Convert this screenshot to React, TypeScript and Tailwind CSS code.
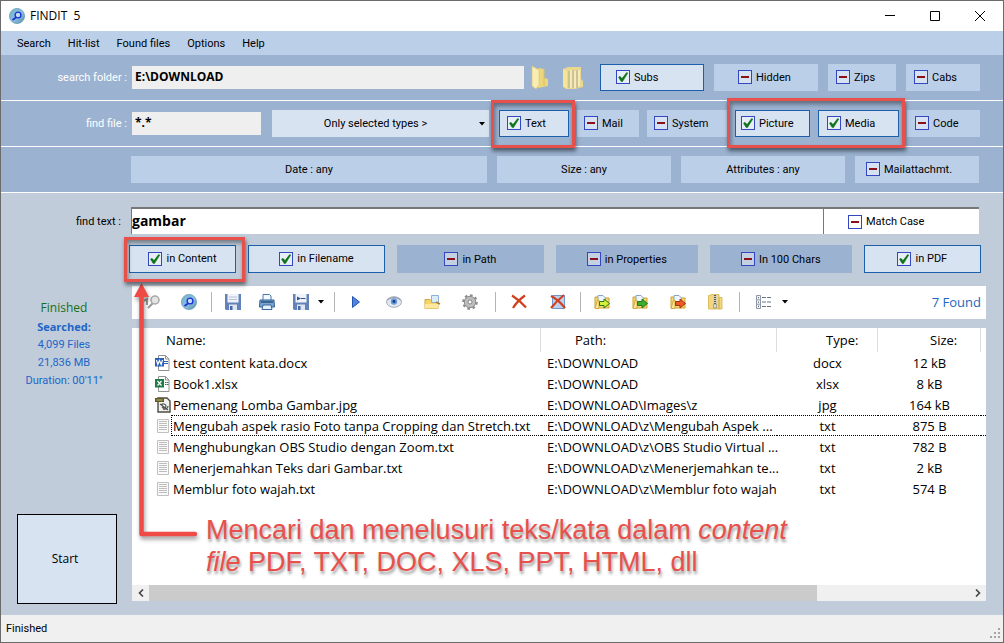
import React from "react";

const ui = "font-['Open_Sans','Noto_Sans',sans-serif]";

function Toggle({ label, checked = false, className = "" }: { label: string; checked?: boolean; className?: string }) {
  return (
    <label className={`flex items-center gap-1 whitespace-nowrap ${className}`}>
      <span className="grid size-3.5 shrink-0">
        <input
          type="checkbox"
          defaultChecked={checked}
          className="peer col-start-1 row-start-1 size-3.5 appearance-none border border-[#3348c0] bg-white/40"
        />
        <svg viewBox="0 0 14 14" className="pointer-events-none col-start-1 row-start-1 hidden size-3.5 peer-checked:block">
          <path d="M2.500 7.200l1.500-.9L6 8.600l4.600-6 1.200.500L6.500 11.600H5.200z" fill="#0a7414" stroke="#0a6a10" strokeWidth=".5" />
        </svg>
        <svg viewBox="0 0 14 14" className="pointer-events-none col-start-1 row-start-1 size-3.5 peer-checked:hidden">
          <path d="M3 6h8v2H3z" fill="#8c1018" />
        </svg>
      </span>
      <span className="pt-0.5">{label}</span>
    </label>
  );
}

const on = "border border-[#1d5fa8] bg-[#d8e3f2] pb-px";
const off = "border border-[#bbcfe9] bg-[#bbcfe9] pb-px";
const dim = "border border-[#9bb2d1] bg-[#9bb2d1]";
const mark = "pointer-events-none absolute border-[3px] border-[#e8504c] shadow-[1px_3px_4px_rgba(0,0,0,0.5),inset_1px_3px_4px_rgba(0,0,0,0.4)]";

function Caret() {
  return (
    <svg width="6" height="4" viewBox="0 0 6 4"><path d="M0 0h6L3 3.500z" fill="#000" /></svg>
  );
}

function FinditLogo() {
  return (
    <svg width="16" height="16" viewBox="0 0 16 16">
      <defs>
        <linearGradient id="lens" x1="0" y1="0" x2="1" y2="1">
          <stop offset="0" stopColor="#6fb4c8" /><stop offset=".55" stopColor="#8fbede" /><stop offset="1" stopColor="#4a8ea4" />
        </linearGradient>
      </defs>
      <circle cx="8" cy="8" r="7.600" fill="url(#lens)" stroke="#5b97ac" strokeWidth=".7" />
      <path d="M7 9.500l-3.500 2.500" stroke="#1733d8" strokeWidth="1.800" />
      <circle cx="9" cy="7" r="2.900" fill="#c4dcf4" stroke="#1733d8" strokeWidth="1.400" />
    </svg>
  );
}

function Disk({ arrow = false }: { arrow?: boolean }) {
  return (
    <svg width="16" height="16" viewBox="0 0 16 16">
      <path d="M0 0h16v16H1l-1-1z" fill="#6482ba" />
      <path d="M2.500 0h11v8.500h-11z" fill="#f0f4fa" />
      <path d="M4 10.500h8V16H4z" fill="#dde5f0" />
      <path d="M5 12h2.500v4H5z" fill="#4668a6" />
      {arrow ? <path d="M4 2.500l4 2-4 2zM8 4h4.500v1H8z" fill="#35548c" /> : <path d="M4 3h8M4 5.500h8" stroke="#b2c1d6" />}
    </svg>
  );
}

function Folder({ arrow }: { arrow: string }) {
  return (
    <svg width="17" height="16" viewBox="0 0 17 16">
      <path d="M1 3h4l1 1h9v10H1z" fill="#f5d778" stroke="#cfa12e" />
      <path d="M4 1.500h5l2.500 2.500V11H4z" fill="#eef5fc" stroke="#86a5c8" />
      <path d="M1 14.500L3.500 6H5v8.500z" fill="#fbe9a0" stroke="#d1aa3c" />
      <path d="M5.500 7.500H10V5l5.500 4.500-5.500 4.500v-2.500H5.500z" fill={arrow} stroke={arrow === "#e85a28" ? "#a8320c" : "#26781c"} />
    </svg>
  );
}

function Zip() {
  return (
    <svg width="15" height="16" viewBox="0 0 15 16">
      <path d="M.5 1.500L4 .5h7v3h3V15H.5z" fill="#f2d77e" stroke="#d3b24c" strokeWidth=".8" />
      <path d="M11 3.500V15" stroke="#caa63e" />
      <path d="M5 1h4v13H5z" fill="#d6d0b8" />
      <path d="M7 1v10" stroke="#555" strokeWidth="2" strokeDasharray="1 1" />
      <path d="M5.700 10h2.600v4H5.700z" fill="#f5f2e5" stroke="#777" strokeWidth=".7" />
    </svg>
  );
}

function Tool({ label, children, className = "" }: { label: string; children: React.ReactNode; className?: string }) {
  return <button type="button" aria-label={label} className={`flex h-6 shrink-0 items-center justify-center ${className}`}>{children}</button>;
}

function Sep() {
  return <span className="h-5 w-px shrink-0 bg-[#b4b4b4]" />;
}

function Toolbar() {
  return (
    <div className="flex h-[33px] items-center bg-white pr-[5px] pb-px pl-2.5">
      <Tool label="Preview" className="w-5">
        <svg width="17" height="16" viewBox="0 0 17 16">
          <path d="M0 7l3-2v6M9 9l-5 5" stroke="#9a9a9a" strokeWidth="2" fill="none" />
          <circle cx="11" cy="6" r="4" fill="#e4e4e4" stroke="#a8a8a8" strokeWidth="1.500" />
        </svg>
      </Tool>
      <Tool label="Find" className="ml-[17px] w-5"><FinditLogo /></Tool>
      <span className="w-3" /><Sep />
      <Tool label="Save" className="ml-[11px] w-5"><Disk /></Tool>
      <Tool label="Print" className="ml-3.5 w-5">
        <svg width="16" height="16" viewBox="0 0 16 16">
          <path d="M4 6V.500h6.500L12 2v4" fill="#f3f8fd" stroke="#4a76ac" />
          <path d="M1 6h14l.500 7H.5z" fill="#7da4d0" stroke="#2f5f98" />
          <path d="M2 8h12" stroke="#24507f" strokeWidth="1.500" />
          <path d="M4 11h8l1 4.500H3z" fill="#e4f0fa" stroke="#38669c" />
        </svg>
      </Tool>
      <Tool label="Save list" className="ml-3.5 w-5"><Disk arrow /></Tool>
      <Tool label="Save options" className="w-5"><Caret /></Tool>
      <span className="w-[3px]" /><Sep />
      <Tool label="Open" className="ml-[11px] w-5">
        <svg width="8" height="12" viewBox="0 0 8 12"><path d="M.5.500L7.500 6l-7 5.500z" fill="#4f83dc" stroke="#2456ae" /></svg>
      </Tool>
      <Tool label="View" className="ml-[18px] w-5">
        <svg width="16" height="12" viewBox="0 0 16 12">
          <ellipse cx="8" cy="6" rx="7.500" ry="5.300" fill="#e2e8f0" stroke="#a8aeb8" />
          <path d="M1 4Q8-1 15 4" fill="none" stroke="#9aa2b0" strokeWidth="1.500" />
          <circle cx="8" cy="5.500" r="3.200" fill="#6699dc" /><circle cx="8" cy="5.500" r="1.400" fill="#173a78" />
        </svg>
      </Tool>
      <Tool label="Open folder" className="ml-[18px] w-5">
        <svg width="17" height="16" viewBox="0 0 17 16">
          <path d="M1 5.500h5L7.500 7H14v7.500H1z" fill="#f6d568" stroke="#d3a63a" />
          <path d="M7.500 1.500h7v7h-7z" fill="#dcebf8" stroke="#8bafd6" />
          <path d="M1 10h13v4.500H1z" fill="#fbe89c" />
          <path d="M12 8l4 2" stroke="#a08040" strokeWidth="1.500" />
        </svg>
      </Tool>
      <Tool label="Settings" className="ml-[18px] w-5">
        <svg width="16" height="16" viewBox="0 0 16 16">
          <circle cx="8" cy="8" r="6.800" fill="none" stroke="#8b8b8b" strokeWidth="2" strokeDasharray="2.700 2.600" />
          <circle cx="8" cy="8" r="5.700" fill="#bdbdbd" stroke="#8d8d8d" />
          <circle cx="8" cy="8" r="2" fill="#fff" stroke="#858585" />
        </svg>
      </Tool>
      <span className="w-[15px]" /><Sep />
      <Tool label="Delete" className="ml-[13px] w-5">
        <svg width="16" height="16" viewBox="0 0 16 16"><path d="M1 1.500C5 4 11 9 15 13.500M14 1.500C9 5 5 9 2 14" fill="none" stroke="#d1401a" strokeWidth="2.200" /></svg>
      </Tool>
      <Tool label="Delete from list" className="ml-[19px] w-5">
        <svg width="16" height="16" viewBox="0 0 16 16">
          <path d="M2.500 1.500h12v13h-12z" fill="#bdd1ef" stroke="#6f95cb" />
          <path d="M1 2c4 2 10 7 14 12M14 1C9 5 5 9 1 14" fill="none" stroke="#d1401a" strokeWidth="2.200" />
        </svg>
      </Tool>
      <span className="w-3" /><Sep />
      <Tool label="Copy" className="ml-[11px] w-5"><Folder arrow="#d9ef36" /></Tool>
      <Tool label="Copy to" className="ml-[18px] w-5"><Folder arrow="#3faa2b" /></Tool>
      <Tool label="Move to" className="ml-[18px] w-5"><Folder arrow="#e85a28" /></Tool>
      <Tool label="Zip" className="ml-[17px] w-5"><Zip /></Tool>
      <span className="w-3.5" /><Sep />
      <Tool label="View mode" className="ml-[13px] w-5">
        <svg width="15" height="14" viewBox="0 0 15 14">
          <path d="M.5.500h4v13h-4zM.5 4.800h4M.5 9.200h4" fill="#f4f6fa" stroke="#8f98a8" />
          <path d="M2 2.700h1M2 7h1M2 11.300h1" stroke="#444" />
          <path d="M6 2.500h9M6 7h9M6 11.500h9" stroke="#687386" strokeDasharray="4 1" />
        </svg>
      </Tool>
      <Tool label="View mode options" className="ml-0.5 w-5"><Caret /></Tool>
      <span className="ml-auto pt-0.5 text-[13px] text-[#1c66c0]">7 Found</span>
    </div>
  );
}

type Kind = "docx" | "xlsx" | "jpg" | "txt";
const files: { name: string; path: string; type: Kind; size: string; focus?: boolean }[] = [
  { name: "test content kata.docx", path: "E:\\DOWNLOAD", type: "docx", size: "12 kB" },
  { name: "Book1.xlsx", path: "E:\\DOWNLOAD", type: "xlsx", size: "8 kB" },
  { name: "Pemenang Lomba Gambar.jpg", path: "E:\\DOWNLOAD\\Images\\z", type: "jpg", size: "164 kB" },
  { name: "Mengubah aspek rasio Foto tanpa Cropping dan Stretch.txt", path: "E:\\DOWNLOAD\\z\\Mengubah Aspek ...", type: "txt", size: "875 B", focus: true },
  { name: "Menghubungkan OBS Studio dengan Zoom.txt", path: "E:\\DOWNLOAD\\z\\OBS Studio Virtual ...", type: "txt", size: "782 B" },
  { name: "Menerjemahkan Teks dari Gambar.txt", path: "E:\\DOWNLOAD\\z\\Menerjemahkan te...", type: "txt", size: "2 kB" },
  { name: "Memblur foto wajah.txt", path: "E:\\DOWNLOAD\\z\\Memblur foto wajah", type: "txt", size: "574 B" },
];

function FileIcon({ kind }: { kind: Kind }) {
  if (kind === "jpg")
    return (
      <svg className="block" width="16" height="16" viewBox="0 0 16 16">
        <path d="M3 1h9l3 3v11H3z" fill="#f2f2ee" stroke="#4c4c46" strokeWidth="1.400" />
        <path d="M0 1h9v4H0z" fill="#5d5a2c" /><path d="M1.500 3h6" stroke="#c8bf6c" />
        <path d="M6 8c2-2 5-1 5 1s-3 3-4 1M8 12c3 1 5-1 5-3M5 7l8 6" fill="none" stroke="#555" strokeWidth="1.200" />
      </svg>
    );
  if (kind === "txt")
    return (
      <svg className="block" width="16" height="16" viewBox="0 0 16 16">
        <path d="M2.500 1.500h11v13h-11z" fill="#fafafa" stroke="#c0c0c0" />
        <path d="M4 3.500h8M4 5.500h8M4 7.500h8M4 9.500h8M4 11.500h8" stroke="#bdbdbd" />
      </svg>
    );
  const word = kind === "docx";
  const color = word ? "#2b5fb8" : "#1e7a47";
  return (
    <svg className="block" width="16" height="16" viewBox="0 0 16 16">
      <path d="M3.500.500h7l3.500 3.500v11.500H3.500z" fill="#fff" stroke="#929292" />
      <path d="M10.500.500V4H14" fill="none" stroke="#929292" />
      <path d={word ? "M9 6.500h4M9 8.500h4" : "M10 6.500h1.500M12 6.500h1.500M10 8.500h1.500M12 8.500h1.500"} stroke={color} />
      <path d="M0 3h9v8.500H0z" fill={color} />
      <path d={word ? "M1.500 5l1.300 4.500L4.500 5.500 6.200 9.500l1.300-4.500" : "M2.500 5l4 4.500M6.500 5l-4 4.500"} fill="none" stroke="#fff" strokeWidth="1.200" />
    </svg>
  );
}

function Results() {
  return (
    <div className="relative mt-[9px] flex flex-1 flex-col bg-white">
      <table className="w-full table-fixed border-separate border-spacing-0 text-[13px] leading-4">
        <colgroup>
          <col className="w-[39px]" /><col /><col className="w-[236px]" /><col className="w-[101px]" /><col className="w-[103px]" /><col className="w-[5px]" />
        </colgroup>
        <thead>
          <tr className="h-6 text-left">
            <th colSpan={2} className="border-r border-[#dcdcdc] p-0 pl-[34px] font-normal">Name:</th>
            <th className="border-r border-[#dcdcdc] p-0 pl-[34px] font-normal">Path:</th>
            <th className="border-r border-[#dcdcdc] p-0 pl-[49px] font-normal">Type:</th>
            <th className="border-r border-[#dcdcdc] p-0 pl-[52px] font-normal">Size:</th>
            <td />
          </tr>
        </thead>
        <tbody>
          {files.map((f) => {
            const edge = f.focus ? "border-y border-dotted border-black" : "";
            return (
              <tr key={f.name} className="h-[21px] whitespace-nowrap">
                <td className="p-0 pl-[23px]"><FileIcon kind={f.type} /></td>
                <td className={`p-0 ${edge} ${f.focus ? "border-l pl-px" : "pl-0.5"}`}>{f.name}</td>
                <td className={`p-0 pl-1.5 ${edge}`}>{f.path}</td>
                <td className={`p-0 text-center ${edge}`}>{f.type}</td>
                <td className={`p-0 text-center ${edge}`}>{f.size}</td>
                <td className={`p-0 ${edge}`} />
              </tr>
            );
          })}
        </tbody>
      </table>
      <p className="pointer-events-none absolute top-[186px] left-[74px] font-['Liberation_Sans',Arial,sans-serif] text-[27px] leading-8 whitespace-nowrap text-[#e8504c] [text-shadow:1px_3px_3px_rgba(0,0,0,0.4)]">
        Mencari dan menelusuri teks/kata dalam <em>content</em>
        <br />
        <em>file</em> PDF, TXT, DOC, XLS, PPT, HTML, dll
      </p>
      <svg className="pointer-events-none absolute -top-[48px] left-0 drop-shadow-[1px_3px_2px_rgba(0,0,0,0.4)]" width="70" height="264" viewBox="0 0 70 264">
        <path d="M9.500 14v240H63" fill="none" stroke="#f04a46" strokeWidth="4.500" strokeLinejoin="round" strokeLinecap="round" />
        <path d="M9.500 3L17 17H2z" fill="#f04a46" />
      </svg>
      <div className="mt-auto flex h-4 items-center bg-[#f0f0f0]">
        <button type="button" aria-label="Scroll left" className="flex w-[17px] justify-center">
          <svg width="6" height="8" viewBox="0 0 6 8"><path d="M5 .5L1.500 4 5 7.500" fill="none" stroke="#444" strokeWidth="1.600" /></svg>
        </button>
        <div className="flex h-full flex-1"><div className="h-full w-[81.500%] bg-[#cbcbcb]" /></div>
        <button type="button" aria-label="Scroll right" className="flex w-[17px] justify-center">
          <svg width="6" height="8" viewBox="0 0 6 8"><path d="M1 .5L4.500 4 1 7.500" fill="none" stroke="#444" strokeWidth="1.600" /></svg>
        </button>
      </div>
    </div>
  );
}

const band = "flex h-[46px] items-center border-b border-white bg-[#9bb2d1]";

export default function App() {
  return (
    <div className={`flex min-h-screen flex-col border border-[#6b6b6b] bg-[#c0ccda] text-black ${ui}`}>
      <header className="flex h-[30px] items-center bg-white pl-2">
        <FinditLogo />
        <h1 className="ml-[5px] text-xs whitespace-pre">FINDIT  5</h1>
        <div className="ml-auto flex">
          <button type="button" aria-label="Minimize" className="flex h-[30px] w-[46px] items-center justify-center"><svg width="10" height="10" viewBox="0 0 10 10"><path d="M0 4.500h10" stroke="#000" /></svg></button>
          <button type="button" aria-label="Maximize" className="flex h-[30px] w-11 items-center justify-center"><svg width="10" height="10" viewBox="0 0 10 10"><path d="M.5.500h9v9h-9z" fill="none" stroke="#000" /></svg></button>
          <button type="button" aria-label="Close" className="flex h-[30px] w-[46px] items-center justify-center"><svg width="10" height="10" viewBox="0 0 10 10"><path d="M0 0l10 10M10 0L0 10" stroke="#000" /></svg></button>
        </div>
      </header>
      <div className="flex flex-1 flex-col font-[Roboto,'Open_Sans',sans-serif] text-[11px]">
        <nav className="flex h-6 items-center gap-[17px] bg-[#bbcfe9] pt-0.5 pl-4">
          <button type="button">Search</button>
          <button type="button">Hit-list</button>
          <button type="button">Found files</button>
          <button type="button">Options</button>
          <button type="button">Help</button>
        </nav>

        <div className={`${band} pr-[23px]`}>
          <label htmlFor="folder" className="mr-[5px] w-[126px] shrink-0 pt-0.5 text-right text-white">search folder :</label>
          <input id="folder" defaultValue="E:\DOWNLOAD" className={`h-[23px] min-w-0 flex-1 bg-[#efefef] px-[3px] pb-0.5 text-xs font-bold ${ui}`} />
          <button type="button" aria-label="Choose folder" className="ml-1.5 w-[22px]">
            <svg width="20" height="25" viewBox="0 0 20 25">
              <path d="M8 3l6 1v9l4 1v7l-10 2z" fill="#ecd67e" />
              <path d="M14 4v17" stroke="#dcc061" />
              <path d="M2 1l7 4v15l-3 4-4-3z" fill="#f8edb4" stroke="#dcc46c" strokeWidth=".6" />
            </svg>
          </button>
          <button type="button" aria-label="Choose several folders" className="ml-2.5 w-6">
            <svg width="22" height="24" viewBox="0 0 22 24">
              <path d="M1 3l5-2h13v12l2 2v6l-8 2H4l-3-2z" fill="#ead88f" />
              <path d="M1 3l4 2v18l-4-3z" fill="#f6e596" />
              <path d="M7 5v17M11 4v18M15 4v18" stroke="#c3bb92" strokeWidth="1.500" />
              <path d="M9 4v18M13 5v17M17 4v16" stroke="#f8f0cc" strokeWidth="1.500" />
            </svg>
          </button>
          <div className="ml-3.5 flex gap-2.5">
            <Toggle label="Subs" checked className={`h-[27px] w-[104px] pl-[15px] ${on}`} />
            <Toggle label="Hidden" className={`h-[27px] w-[104px] pl-[23px] ${off}`} />
            <Toggle label="Zips" className={`h-[27px] w-[68px] pl-[7px] ${off}`} />
            <Toggle label="Cabs" className={`h-[27px] w-[74px] pl-[7px] ${off}`} />
          </div>
        </div>

        <div className={`${band} pr-[23px]`}>
          <label htmlFor="mask" className="mr-[5px] w-[126px] shrink-0 pt-0.5 text-right text-white">find file :</label>
          <input id="mask" defaultValue="*.*" className={`h-[23px] w-[129px] bg-[#efefef] px-[3px] pb-0.5 text-xs font-bold ${ui}`} />
          <div className="mr-2.5 ml-[11px] grid flex-1 items-center">
            <select aria-label="File types" className="col-start-1 row-start-1 h-[27px] appearance-none bg-[#d8e3f2] pt-0.5 pr-2.5 text-center [text-align-last:center]">
              <option>Only selected types &gt;</option>
            </select>
            <span className="pointer-events-none col-start-1 row-start-1 mr-1 justify-self-end"><Caret /></span>
          </div>
          <div className="flex gap-2">
            <div className="relative z-10">
              <Toggle label="Text" checked className={`h-[27px] w-[70px] pl-[7px] ${on}`} />
              <span className={`-top-2.5 -right-1.5 -bottom-[11px] -left-2 ${mark}`} />
            </div>
            <Toggle label="Mail" className={`h-[27px] w-[62px] pl-1.5 ${off}`} />
            <Toggle label="System" className={`h-[27px] w-20 pl-1.5 ${off}`} />
            <div className="relative z-10 flex gap-2">
              <Toggle label="Picture" checked className={`h-[27px] w-[75px] pl-[5px] ${on}`} />
              <Toggle label="Media" checked className={`h-[27px] w-[81px] pl-2 ${on}`} />
              <span className={`-top-3 -right-1.5 -bottom-[11px] -left-2 ${mark}`} />
            </div>
            <Toggle label="Code" className={`h-[27px] w-[73px] pl-[7px] ${off}`} />
          </div>
        </div>

        <div className={`${band} gap-2.5 pr-6 pl-[130px]`}>
          <button type="button" className="h-[27px] flex-1 bg-[#bbcfe9] pt-0.5">Date : any</button>
          <button type="button" className="h-[27px] w-[174px] bg-[#bbcfe9] pt-0.5">Size : any</button>
          <button type="button" className="h-[27px] w-[164px] bg-[#bbcfe9] pt-0.5">Attributes : any</button>
          <Toggle label="Mailattachmt." className={`h-[27px] w-[124px] pl-2.5 ${off}`} />
        </div>

        <main className="flex flex-1">
          <aside className="flex w-[128px] shrink-0 flex-col items-center pb-[11px] leading-[18px]">
            <label htmlFor="needle" className="mt-5 mr-2 self-end">find text :</label>
            <div className="mt-[67px] mr-0.5 text-center text-[#1c66c8]">
              <p className={`text-xs leading-5 text-[#157015] ${ui}`}>Finished</p>
              <p className={`font-bold ${ui}`}>Searched:</p>
              <p>4,099 Files</p>
              <p>21,836 MB</p>
              <p>Duration: 00&apos;11&quot;</p>
            </div>
            <button type="button" className={`mt-auto ml-1 h-[90px] w-[100px] border border-black bg-[#d8e3f2] pr-1 text-xs ${ui}`}>Start</button>
          </aside>
          <div className="flex min-w-0 flex-1 flex-col pb-3.5">
            <div className="mt-3.5 mr-6 ml-0.5 flex h-[27px] border-t-2 border-[#777] bg-white">
              <input id="needle" defaultValue="gambar" className={`min-w-0 flex-1 border-x border-[#777] bg-white pb-0.5 text-sm font-bold ${ui}`} />
              <Toggle label="Match Case" className="w-[155px] pl-6" />
            </div>
            <div className="mt-[11px] mr-[22px] flex gap-3">
              <div className="relative z-10 w-[107px]">
                <Toggle label="in Content" checked className={`h-7 justify-center ${on}`} />
                <span className={`-top-2 -right-[9px] -bottom-[9px] -left-[5px] ${mark}`} />
              </div>
              <Toggle label="in Filename" checked className={`h-7 flex-[137] justify-center ${on}`} />
              <Toggle label="in Path" className={`h-7 flex-[147] justify-center ${dim}`} />
              <Toggle label="in Properties" className={`h-7 flex-[142] justify-center ${dim}`} />
              <Toggle label="In 100 Chars" className={`h-7 flex-[142] justify-center ${dim}`} />
              <Toggle label="in PDF" checked className={`h-7 flex-[117] justify-center ${on}`} />
            </div>
            <div className={`mt-[13px] mr-[17px] ml-[3px] flex flex-1 flex-col ${ui}`}>
              <Toolbar />
              <Results />
            </div>
          </div>
        </main>

        <footer className="flex h-[27px] items-center justify-between bg-[#f0f0f0] pl-[5px]">
          <span className="pt-0.5">Finished</span>
          <svg className="mt-2 mr-0.5" width="12" height="12" viewBox="0 0 12 12">
            <path d="M9 1h2v2H9zM5 5h2v2H5zM9 5h2v2H9zM1 9h2v2H1zM5 9h2v2H5zM9 9h2v2H9z" fill="#a5a5a5" />
          </svg>
        </footer>
      </div>
    </div>
  );
}
